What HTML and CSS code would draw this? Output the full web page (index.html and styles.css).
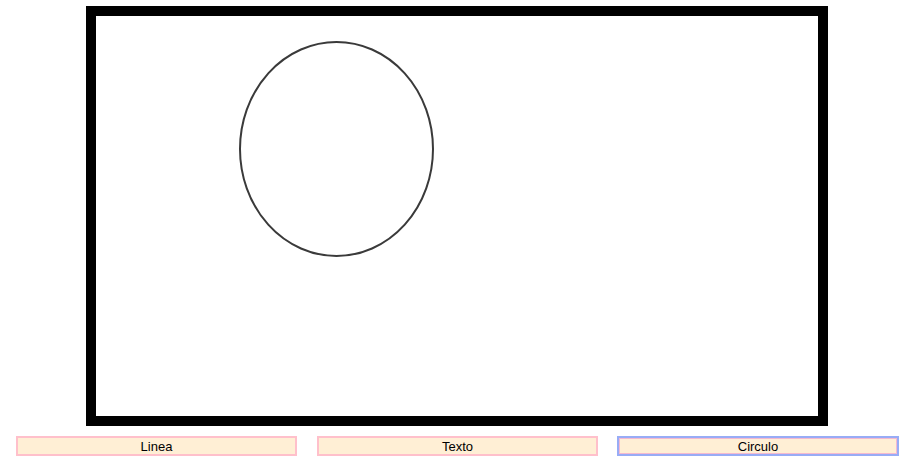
FILE: index.html
```html
<!DOCTYPE html>
<html>
<head>
<meta charset="utf-8">
<link rel="stylesheet" href="styles.css">
</head>
<body>
<div class="page">
  <div class="stage">
    <div class="canvas">
      <svg class="drawing" width="722" height="400" viewBox="0 0 722 400">
        <ellipse cx="240.5" cy="133" rx="96.5" ry="107" fill="none" stroke="#3a3a3a" stroke-width="2"/>
      </svg>
    </div>
  </div>
  <div class="tools">
    <button class="tool">Linea</button>
    <button class="tool">Texto</button>
    <button class="tool active">Circulo</button>
  </div>
</div>
</body>
</html>
```
FILE: styles.css
```css
html, body {
  margin: 0;
  padding: 0;
  background: #fff;
}
.page {
  width: 912px;
  padding-top: 6px;
  font-family: "Liberation Sans", Arial, sans-serif;
}
.stage {
  display: flex;
  padding-left: 86px;
}
.canvas {
  width: 722px;
  height: 400px;
  border: 10px solid #000;
  background: #fff;
}
.drawing {
  display: block;
}
.tools {
  display: flex;
  gap: 20px;
  padding-left: 16px;
  margin-top: 10px;
}
.tool {
  box-sizing: border-box;
  width: 281px;
  height: 20px;
  padding: 0;
  margin: 0;
  border: 2px solid #ffc0cb;
  background: #ffefd5;
  color: #000;
  font-family: "Liberation Sans", Arial, sans-serif;
  font-size: 13px;
  line-height: 17px;
}
.tool.active {
  width: 282px;
  margin-left: -1px;
  border: 2px solid #98acf6;
  box-shadow: inset 0 0 0 1px #f4b9cf;
}
```
